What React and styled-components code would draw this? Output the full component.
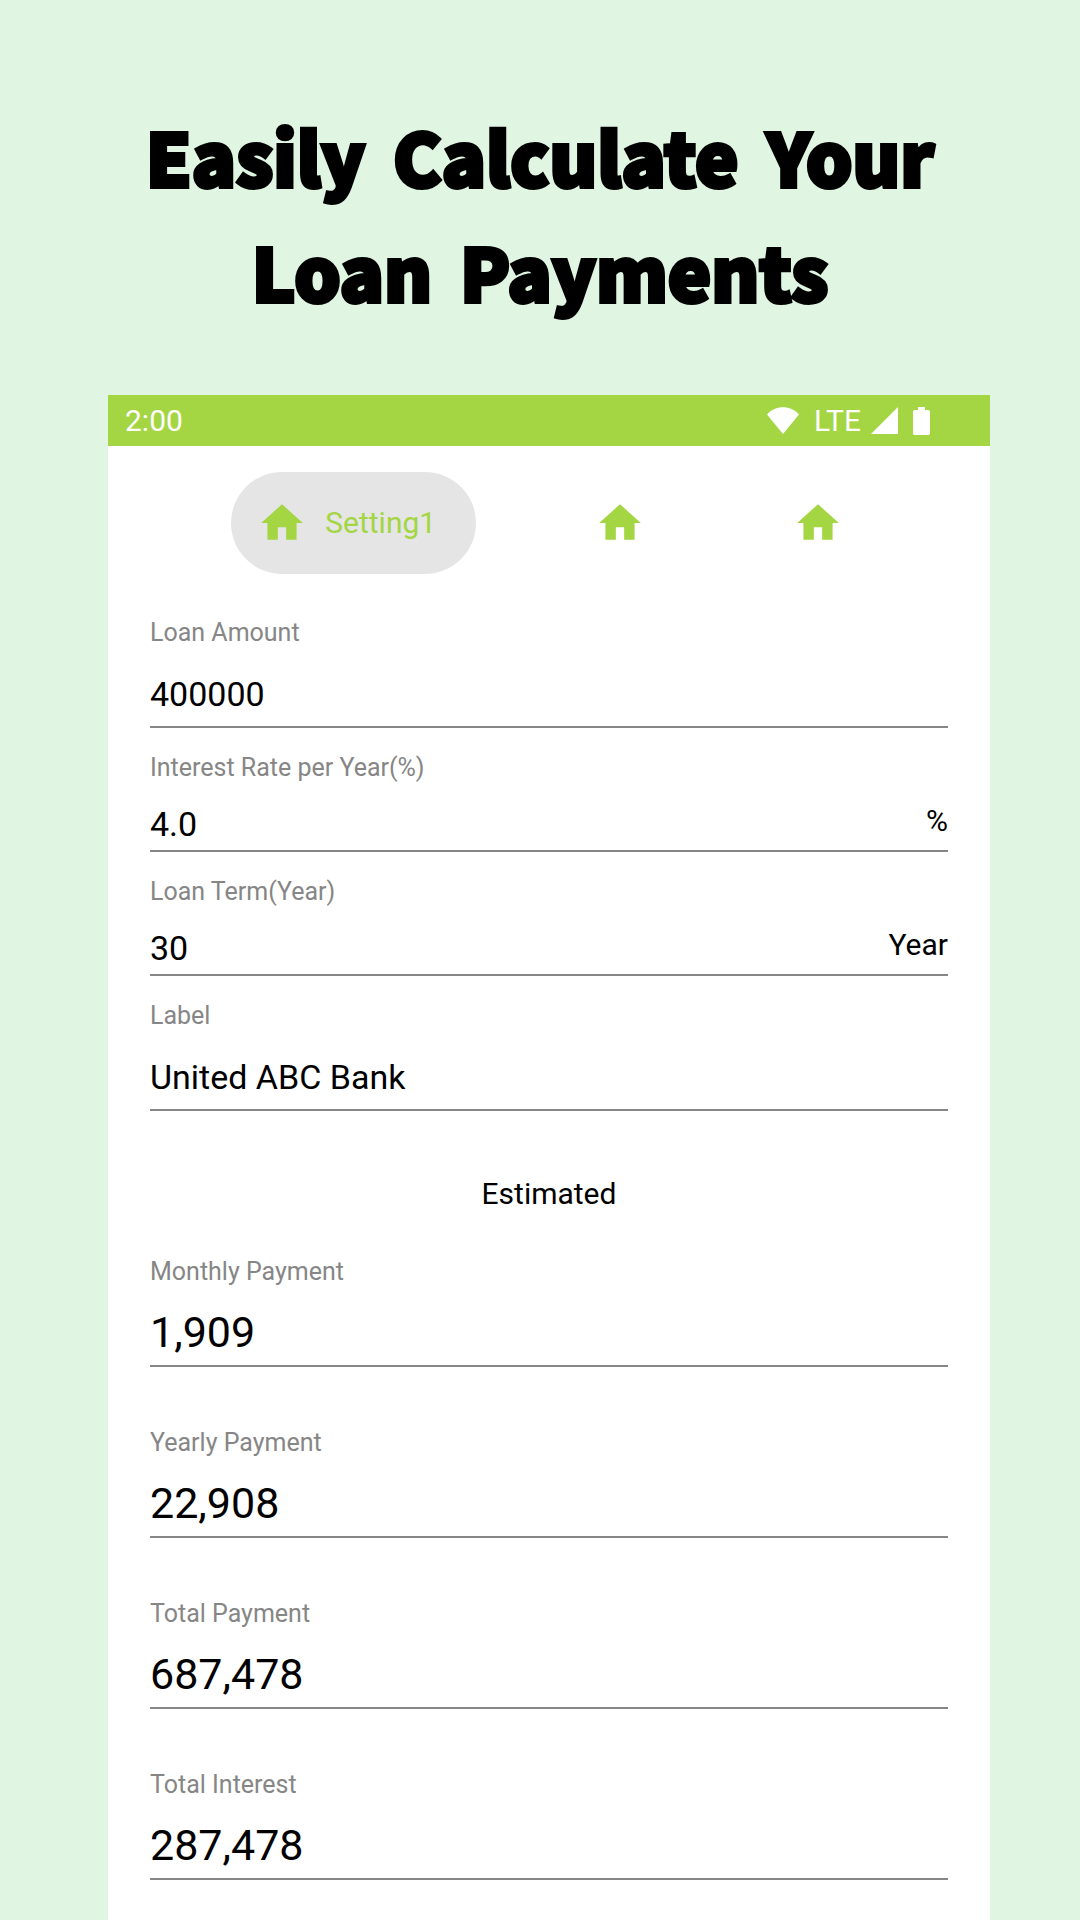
import React, { useState } from "react";
import styled, { createGlobalStyle } from "styled-components";

const GlobalStyle = createGlobalStyle`
  *, *::before, *::after { box-sizing: border-box; }
  body {
    margin: 0;
    background: #e0f6e3;
    color: #000;
    font-family: Roboto, "Liberation Sans", sans-serif;
  }
`;

const Page = styled.main`
  display: flex;
  flex-direction: column;
  min-height: 100vh;
`;

const Title = styled.h1`
  display: flex;
  flex-direction: column;
  align-items: center;
  margin: 0;
  padding: 98px 40px 67px;
  font-family: "Noto Sans CJK JP", "Noto Sans", sans-serif;
  font-size: 73px;
  font-weight: 900;
  line-height: 115px;
  -webkit-text-stroke: 4px #000;
  stroke-linejoin: round;
`;

const TitleLine = styled.span`
  display: flex;
  flex-wrap: wrap;
  justify-content: center;
  column-gap: 28px;
`;

const Phone = styled.section`
  flex: 1;
  margin: 0 90px 0 108px;
  background: #fff;
`;

const StatusBar = styled.div`
  display: flex;
  align-items: center;
  justify-content: space-between;
  height: 51px;
  padding: 0 60px 0 17px;
  background: #a4d543;
  color: #fff;
  font-size: 30px;
  line-height: 40px;
`;

const StatusIcons = styled.div`
  display: flex;
  align-items: center;
  gap: 15px;

  svg { display: block; fill: currentColor; }
`;

const Network = styled.div`
  display: flex;
  align-items: center;
  gap: 10px;
`;

const Tabs = styled.nav`
  display: flex;
  justify-content: space-evenly;
  padding: 26px 28px 43px 32px;
`;

const Tab = styled.button`
  display: flex;
  align-items: center;
  gap: 18px;
  height: 102px;
  padding: ${({ $active }) => ($active ? "0 40px 0 26px" : "0 28px")};
  border: 0;
  border-radius: 51px;
  background: ${({ $active }) => ($active ? "#e5e5e5" : "transparent")};
  color: #a4d543;
  font: inherit;
  font-size: 30px;
  line-height: 40px;
  cursor: pointer;

  svg { display: block; fill: currentColor; }
`;

const Form = styled.form`
  display: flex;
  flex-direction: column;
  padding: 0 42px 40px;
`;

const Fields = styled.div`
  display: flex;
  flex-direction: column;
  gap: ${({ $gap }) => $gap}px;
`;

const Field = styled.div`
  display: flex;
  flex-direction: column;
  border-bottom: 2px solid #868686;
`;

const FieldLabel = styled.label`
  color: #868686;
  font-size: 25px;
  line-height: 32px;
`;

const ValueRow = styled.div`
  display: flex;
  align-items: flex-start;
  padding: ${({ $compact }) => ($compact ? "16px 0 2px" : "21px 0 8px")};
`;

const ValueInput = styled.input`
  flex: 1;
  min-width: 0;
  height: 48px;
  padding: 0;
  border: 0;
  outline: 0;
  background: transparent;
  color: #000;
  font: inherit;
  font-size: 34px;
  line-height: 48px;
`;

const Unit = styled.span`
  font-size: 30px;
  line-height: 42px;
`;

const SectionTitle = styled.h2`
  margin: 63px 0 42px;
  font-size: 30px;
  font-weight: 400;
  line-height: 40px;
  text-align: center;
`;

const Result = styled.output`
  padding: 16px 0 5px;
  font-size: 43px;
  line-height: 56px;
`;

const HomeIcon = () => (
  <svg width="50" height="50" viewBox="0 0 24 24" aria-hidden="true">
    <path d="M10 20v-6h4v6h5v-8h3L12 3 2 12h3v8z" />
  </svg>
);

const WifiIcon = () => (
  <svg width="32" height="27" viewBox="0 0 32 27" aria-hidden="true">
    <path d="M0 7.5C4.5 2.7 10 0.3 16 0.3s11.500 2.400 16 7.200L16 27z" />
  </svg>
);

const SignalIcon = () => (
  <svg width="27" height="27" viewBox="0 0 27 27" aria-hidden="true">
    <path d="M27 0v27H0z" />
  </svg>
);

const BatteryIcon = () => (
  <svg width="17" height="28" viewBox="0 0 17 28" aria-hidden="true">
    <path d="M5 0h7v3h3.200c1 0 1.800.8 1.800 1.800v21.400c0 1-.8 1.800-1.800 1.800H1.800C.8 28 0 27.200 0 26.200V4.800C0 3.800.8 3 1.800 3H5z" />
  </svg>
);

const titleLines = [
  ["Easily", "Calculate", "Your"],
  ["Loan", "Payments"],
];

const inputs = [
  { id: "amount", label: "Loan Amount", value: "400000" },
  { id: "rate", label: "Interest Rate per Year(%)", value: "4.0", unit: "%" },
  { id: "term", label: "Loan Term(Year)", value: "30", unit: "Year" },
  { id: "name", label: "Label", value: "United ABC Bank" },
];

const results = [
  { id: "monthly", label: "Monthly Payment", value: "1,909" },
  { id: "yearly", label: "Yearly Payment", value: "22,908" },
  { id: "total", label: "Total Payment", value: "687,478" },
  { id: "interest", label: "Total Interest", value: "287,478" },
];

export default function App() {
  const [active, setActive] = useState(0);

  return (
    <>
      <GlobalStyle />
      <Page>
        <Title>
          {titleLines.map((words) => (
            <TitleLine key={words[0]}>
              {words.map((word) => (
                <span key={word}>{word} </span>
              ))}
            </TitleLine>
          ))}
        </Title>
        <Phone>
          <StatusBar>
            <span>2:00</span>
            <StatusIcons>
              <WifiIcon />
              <Network>
                <span>LTE</span>
                <SignalIcon />
              </Network>
              <BatteryIcon />
            </StatusIcons>
          </StatusBar>
          <Tabs>
            {[0, 1, 2].map((index) => (
              <Tab
                key={index}
                type="button"
                $active={index === active}
                aria-label={`Setting${index + 1}`}
                onClick={() => setActive(index)}
              >
                <HomeIcon />
                {index === active && <span>Setting{index + 1}</span>}
              </Tab>
            ))}
          </Tabs>
          <Form>
            <Fields $gap={24}>
              {inputs.map(({ id, label, value, unit }) => (
                <Field key={id}>
                  <FieldLabel htmlFor={id}>{label}</FieldLabel>
                  <ValueRow $compact={Boolean(unit)}>
                    <ValueInput id={id} type="text" defaultValue={value} />
                    {unit && <Unit>{unit}</Unit>}
                  </ValueRow>
                </Field>
              ))}
            </Fields>
            <SectionTitle>Estimated</SectionTitle>
            <Fields $gap={60}>
              {results.map(({ id, label, value }) => (
                <Field key={id}>
                  <FieldLabel htmlFor={id}>{label}</FieldLabel>
                  <Result id={id}>{value}</Result>
                </Field>
              ))}
            </Fields>
          </Form>
        </Phone>
      </Page>
    </>
  );
}
